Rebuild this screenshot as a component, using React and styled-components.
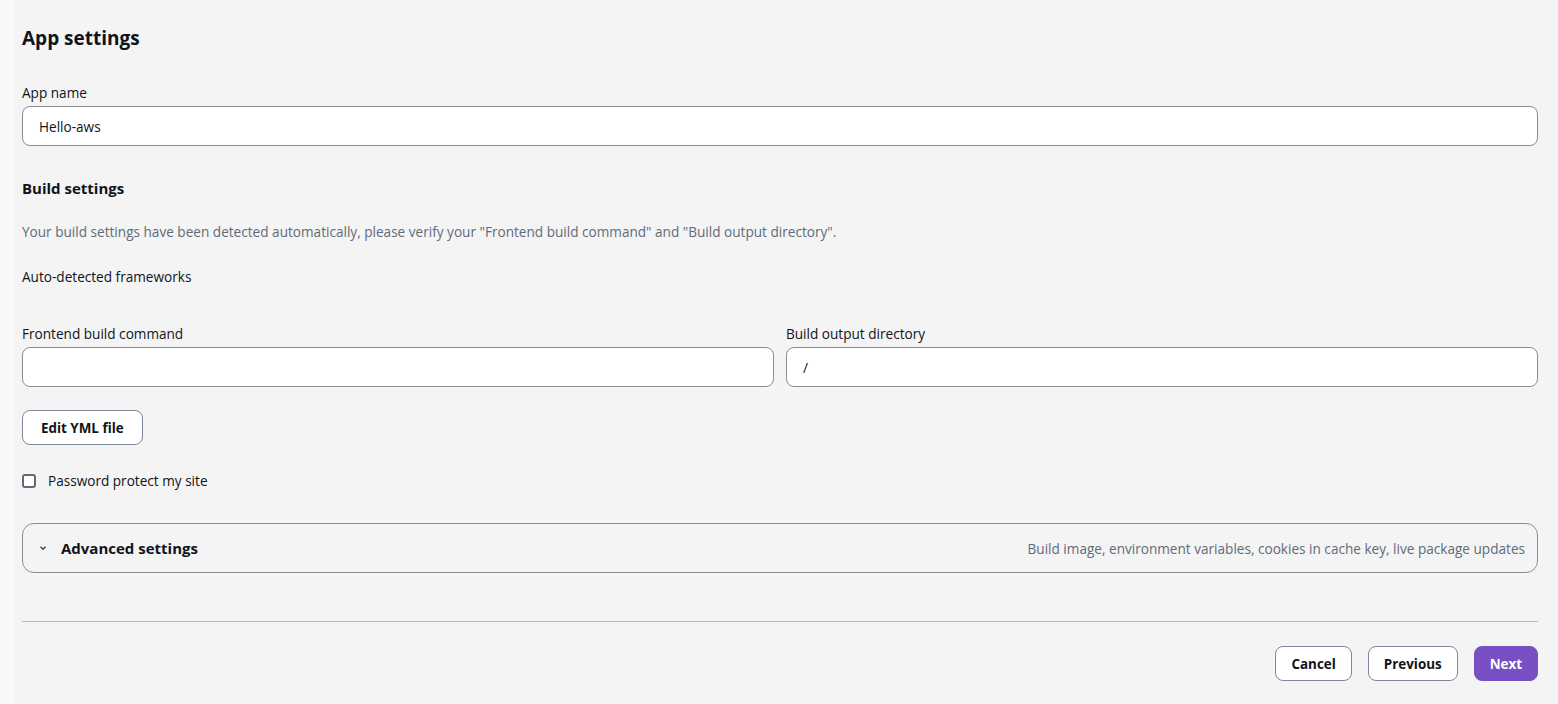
import React from "react";
import styled, { createGlobalStyle } from "styled-components";

const Global = createGlobalStyle`
  html, body { margin: 0; padding: 0; background: #f4f4f4; }
  body { font-family: "Open Sans", "Noto Sans", sans-serif; color: #0f141a; }
  * { box-sizing: border-box; }
`;

const Page = styled.div`
  min-height: 704px;
  border-left: 14px solid #f8f8f8;
  padding: 24px 20px 0 8px;
  display: flex;
  flex-direction: column;
`;

const Title = styled.h2`
  margin: 0;
  font-size: 19px;
  font-weight: 700;
  line-height: 28px;
`;

const Field = styled.div`
  display: flex;
  flex-direction: column;
  gap: 4px;
`;

const Label = styled.label`
  font-size: 13.6px;
  line-height: 18px;
  color: #0f141a;
`;

const Input = styled.div`
  height: 40px;
  background: #fff;
  border: 1px solid #8c8c94;
  border-radius: 8px;
  padding: 0 16px;
  display: flex;
  align-items: center;
  font-size: 13.6px;
`;

const SubTitle = styled.h3`
  margin: 0;
  font-size: 15px;
  font-weight: 700;
  line-height: 20px;
`;

const Desc = styled.p`
  margin: 0;
  font-size: 13.6px;
  line-height: 18px;
  color: #5f6b7a;
`;

const Text = styled.div`
  font-size: 13.6px;
  line-height: 18px;
`;

const Columns = styled.div`
  display: grid;
  grid-template-columns: 1fr 1fr;
  gap: 12px;
`;

const Button = styled.button`
  font-family: inherit;
  font-size: 13.4px;
  font-weight: 700;
  height: 35px;
  padding: 0 ${(p) => (p.$wide ? 18 : 15)}px;
  border-radius: 8px;
  border: 1px solid ${(p) => (p.$primary ? "#7850c4" : "#7d8998")};
  background: ${(p) => (p.$primary ? "#7850c4" : "#fff")};
  color: ${(p) => (p.$primary ? "#fff" : "#0f141a")};
`;

const CheckRow = styled.label`
  display: flex;
  align-items: center;
  gap: 12px;
  font-size: 13.6px;
`;

const Box = styled.span`
  width: 14px;
  height: 14px;
  border: 2px solid #5f6b7a;
  border-radius: 3px;
  background: #fff;
`;

const Expander = styled.div`
  height: 50px;
  border: 1px solid #8c8c94;
  border-radius: 12px;
  display: flex;
  align-items: center;
  padding: 0 12px 0 16px;
`;

const ExpTitle = styled.span`
  font-size: 15px;
  font-weight: 700;
  margin-left: 14px;
  flex: 1;
`;

const ExpDesc = styled.span`
  font-size: 13.6px;
  color: #5f6b7a;
`;

const Divider = styled.hr`
  margin: 0;
  border: 0;
  border-top: 1px solid #b4bac2;
`;

const Footer = styled.div`
  display: flex;
  justify-content: flex-end;
  gap: 16px;
`;

const Stack = styled.div`
  margin-top: ${(p) => p.$mt}px;
`;

export default function App() {
  return (
    <>
      <Global />
      <Page>
        <Title>App settings</Title>
        <Stack $mt={32}>
          <Field>
            <Label>App name</Label>
            <Input>Hello-aws</Input>
          </Field>
        </Stack>
        <Stack $mt={32}>
          <SubTitle>Build settings</SubTitle>
        </Stack>
        <Stack $mt={25}>
          <Desc>
            Your build settings have been detected automatically, please verify your "Frontend build command" and "Build output directory".
          </Desc>
        </Stack>
        <Stack $mt={27}>
          <Text>Auto-detected frameworks</Text>
        </Stack>
        <Stack $mt={39}>
          <Columns>
            <Field>
              <Label>Frontend build command</Label>
              <Input />
            </Field>
            <Field>
              <Label>Build output directory</Label>
              <Input>/</Input>
            </Field>
          </Columns>
        </Stack>
        <Stack $mt={23}>
          <Button $wide>Edit YML file</Button>
        </Stack>
        <Stack $mt={26}>
          <CheckRow>
            <Box />
            Password protect my site
          </CheckRow>
        </Stack>
        <Stack $mt={33}>
          <Expander>
            <svg width="8" height="8" viewBox="0 0 8 8">
              <path d="M1.5 2.8 L4 5.2 L6.5 2.8" fill="none" stroke="#424650" strokeWidth="1.5" />
            </svg>
            <ExpTitle>Advanced settings</ExpTitle>
            <ExpDesc>Build image, environment variables, cookies in cache key, live package updates</ExpDesc>
          </Expander>
        </Stack>
        <Stack $mt={48}>
          <Divider />
        </Stack>
        <Stack $mt={24}>
          <Footer>
            <Button>Cancel</Button>
            <Button>Previous</Button>
            <Button $primary>Next</Button>
          </Footer>
        </Stack>
      </Page>
    </>
  );
}
